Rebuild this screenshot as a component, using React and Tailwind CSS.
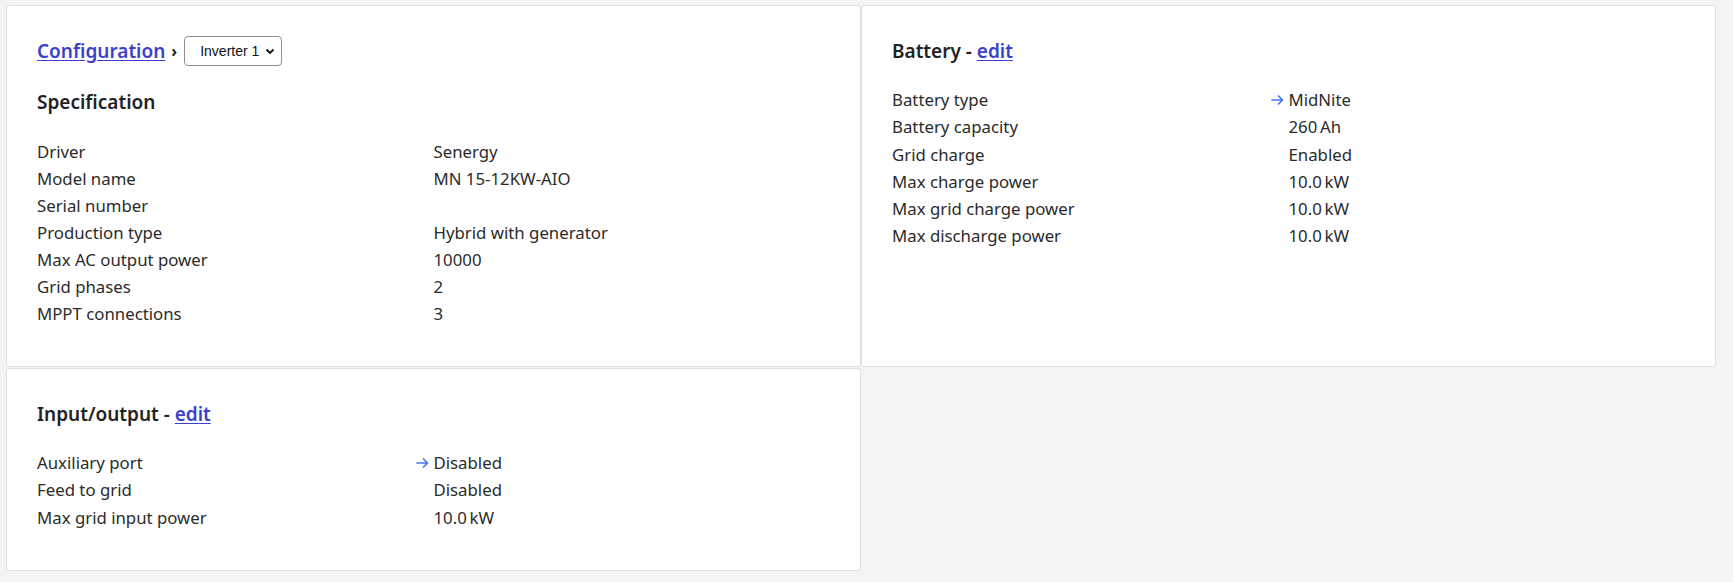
import React from 'react';

const spec = [
  ['Driver', 'Senergy'],
  ['Model name', 'MN 15-12KW-AIO'],
  ['Serial number', ''],
  ['Production type', 'Hybrid with generator'],
  ['Max AC output power', '10000'],
  ['Grid phases', '2'],
  ['MPPT connections', '3'],
];

const battery = [
  ['Battery type', 'MidNite', true],
  ['Battery capacity', '260\u2009Ah'],
  ['Grid charge', 'Enabled'],
  ['Max charge power', '10.0\u2009kW'],
  ['Max grid charge power', '10.0\u2009kW'],
  ['Max discharge power', '10.0\u2009kW'],
];

const io = [
  ['Auxiliary port', 'Disabled', true],
  ['Feed to grid', 'Disabled'],
  ['Max grid input power', '10.0\u2009kW'],
];

function Arrow() {
  return (
    <svg className="absolute right-full top-[9px] mr-[5px]" width="13" height="10" viewBox="0 0 13 10">
      <path d="M1 5h10.5M7.5 1l4 4-4 4" fill="none" stroke="#4a78f5" strokeWidth="1.7" strokeLinecap="round" strokeLinejoin="round" />
    </svg>
  );
}

function Table({ rows, lh }) {
  return (
    <div className={`grid grid-cols-2 mb-[9px] text-[16.8px] text-[#2b2b2b] ${lh}`}>
      {rows.map(([k, v, mark]) => (
        <React.Fragment key={k}>
          <div>{k}</div>
          <div className="relative">
            {mark && <Arrow />}
            {v || '\u00a0'}
          </div>
        </React.Fragment>
      ))}
    </div>
  );
}

function Card({ children }) {
  return (
    <div className="bg-white border border-[#e0e0e0] rounded-[3px] px-[30px] pt-[30px] pb-[30px]">
      {children}
    </div>
  );
}

function Title({ children }) {
  return (
    <h2 className="text-[19px] font-semibold leading-[30px] mb-[20px] text-[#222]">{children}</h2>
  );
}

export default function App() {
  return (
    <div
      className="min-h-screen bg-[#f3f4f6] pt-[5px] pl-[6px] pr-[17px]"
      style={{ fontFamily: '"Noto Sans", "Open Sans", sans-serif' }}
    >
      <div className="grid grid-cols-2">
        <Card>
          <div className="flex items-center h-[30px] mb-[21px] text-[19px] font-semibold">
            <a href="#" className="text-[#3c3fcc] underline underline-offset-2">Configuration</a>
            <span className="ml-[6px] mr-[7px] text-[#222] text-[16px] font-bold">›</span>
            <div
              className="relative h-[30px] w-[98px] border border-[#8f8f8f] rounded-[4px] flex items-center pl-[15px] text-[14px] font-normal text-[#111]"
              style={{ fontFamily: '"Liberation Sans", Arial, sans-serif' }}
            >
              Inverter 1
              <svg className="absolute right-[6px] top-[11px]" width="10" height="7" viewBox="0 0 10 7">
                <path d="M1.5 1.5l3.5 3.5 3.5-3.5" fill="none" stroke="#111" strokeWidth="1.8" />
              </svg>
            </div>
          </div>
          <h2 className="text-[19px] font-semibold leading-[30px] mb-[21px] text-[#222]">Specification</h2>
          <Table rows={spec} lh="leading-[27px]" />
        </Card>
        <Card>
          <Title>
            Battery - <a href="#" className="text-[#3c3fcc] underline underline-offset-2">edit</a>
          </Title>
          <Table rows={battery} lh="leading-[27.3px]" />
        </Card>
        <div className="mt-[1px]">
          <Card>
            <Title>
              Input/output - <a href="#" className="text-[#3c3fcc] underline underline-offset-2">edit</a>
            </Title>
            <Table rows={io} lh="leading-[27.3px]" />
          </Card>
        </div>
        <div />
      </div>
    </div>
  );
}
